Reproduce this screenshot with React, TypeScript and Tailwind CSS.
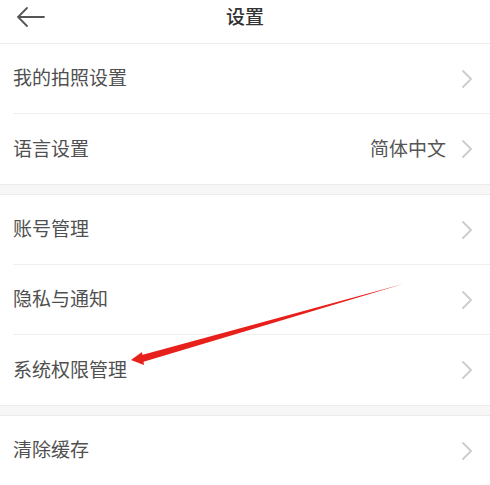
const groups = [
  [
    { label: "我的拍照设置" },
    { label: "语言设置", value: "简体中文" },
  ],
  [
    { label: "账号管理" },
    { label: "隐私与通知" },
    { label: "系统权限管理" },
  ],
  [{ label: "清除缓存" }],
];

const font = {
  fontFamily: '"Noto Sans CJK SC", "Noto Sans", sans-serif',
};

function Chevron() {
  return (
    <svg
      width="12"
      height="20"
      viewBox="0 0 12 20"
      fill="none"
      stroke="#cccccc"
      strokeWidth="1.8"
      strokeLinecap="round"
      strokeLinejoin="round"
    >
      <path d="M2 2l8 8-8 8" />
    </svg>
  );
}

function Row({
  label,
  value,
  last,
}: {
  label: string;
  value?: string;
  last: boolean;
}) {
  return (
    <div className="pl-[13px]">
      <div
        className={`flex h-[70px] items-center pr-[17px] ${
          last ? "" : "border-b border-[#efefef]"
        }`}
      >
        <span className="-mt-[2px] flex-1 text-[19px] text-[#505050]">
          {label}
        </span>
        {value ? (
          <span className="-mt-[2px] mr-[15px] text-[19px] text-[#555]">
            {value}
          </span>
        ) : null}
        <Chevron />
      </div>
    </div>
  );
}

export default function App() {
  return (
    <div
      className="relative h-[485px] w-[490px] overflow-hidden bg-white"
      style={font}
    >
      <header className="flex h-[44px] items-center justify-center border-b border-[#ececec]">
        <svg
          className="absolute left-[16px] top-[6px]"
          width="30"
          height="22"
          viewBox="0 0 30 22"
          fill="none"
          stroke="#555"
          strokeWidth="1.8"
          strokeLinecap="round"
        >
          <path d="M2 11h26M11 2 2 11l9 9" />
        </svg>
        <h1 className="-mt-[10px] text-[19px] font-medium text-[#333]">
          设置
        </h1>
      </header>

      {groups.map((rows, gi) => (
        <div key={gi}>
          {gi > 0 ? (
            <div className="h-[11px] border-y border-[#ececec] bg-[#f7f7f7]"></div>
          ) : null}
          {rows.map((row, ri) => (
            <Row
              key={row.label}
              label={row.label}
              value={row.value}
              last={ri === rows.length - 1 && gi < groups.length - 1}
            />
          ))}
        </div>
      ))}

      <svg
        className="pointer-events-none absolute left-0 top-0"
        width="490"
        height="485"
        viewBox="0 0 490 485"
      >
        <path d="M403 284 L140 355.5 L141 362.5 Z" fill="#e8201c" />
        <path d="M131 360 L142 352 L144 365 Z" fill="#e8201c" />
      </svg>
    </div>
  );
}
